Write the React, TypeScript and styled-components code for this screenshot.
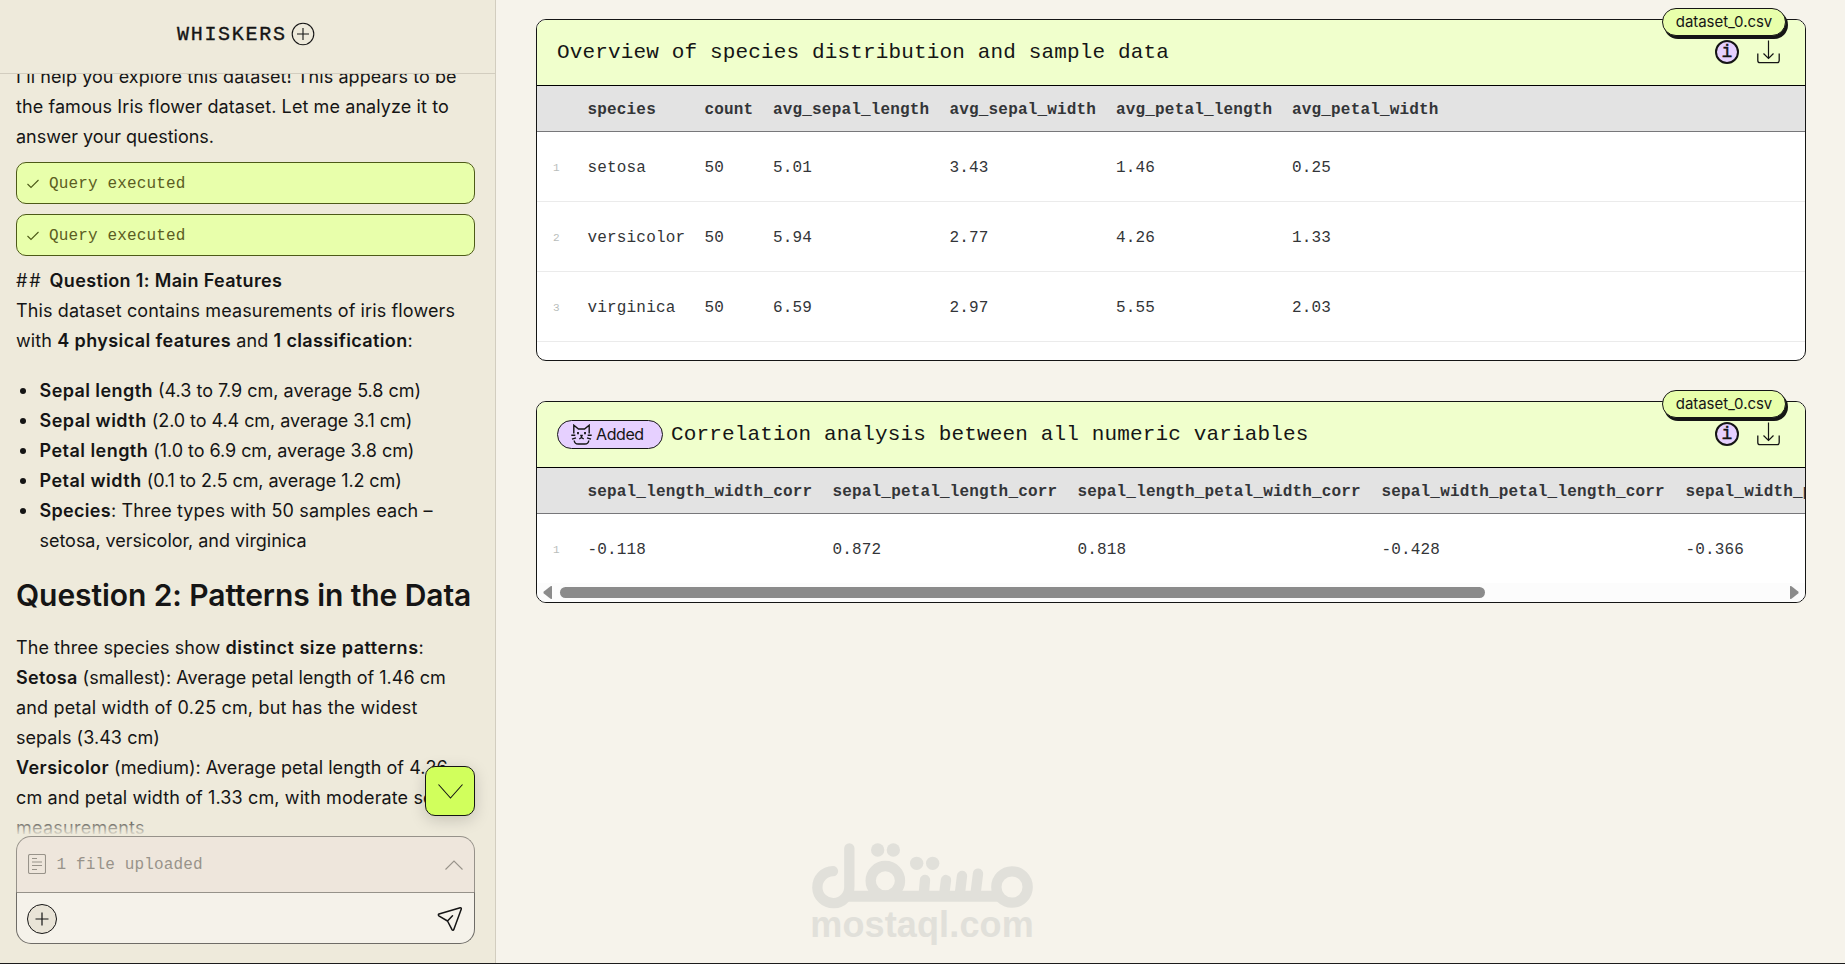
import React from 'react';
import styled, { createGlobalStyle } from 'styled-components';

const sans = `Inter, "Liberation Sans", sans-serif`;
const mono = `"Liberation Mono", "DejaVu Sans Mono", monospace`;
const ink = '#151515';

const GlobalStyle = createGlobalStyle`
  *, *::before, *::after { box-sizing: border-box; }
  html, body { margin: 0; height: 100%; overflow: hidden; }
  body { font-family: ${sans}; color: ${ink}; background: #f6f3eb; }
  svg { display: block; flex: none; }
`;

const Page = styled.div`
  display: flex;
  height: 964px;
  border-bottom: 1px solid #1c1c1c;
`;

/* ---------- sidebar ---------- */

const Sidebar = styled.aside`
  display: flex;
  flex-direction: column;
  flex: none;
  width: 496px;
  background: #eeeadb;
  border-right: 1px solid #d2cdbf;
`;

const Brand = styled.header`
  display: flex;
  align-items: center;
  gap: 4px;
  flex: none;
  height: 74px;
  padding: 0 0 6px 177px;
  border-bottom: 1px solid #d2cdbf;
`;

const BrandName = styled.span`
  padding-top: 2px;
  font: 20px/24px ${mono};
  letter-spacing: 1.7px;
  -webkit-text-stroke: 0.35px ${ink};
`;

const Thread = styled.section`
  position: relative;
  height: 762px;
  flex: none;
  overflow: hidden;
  padding: 0 20px 0 16px;
`;

const Messages = styled.div`
  margin-top: -12px;
  font-size: 18px;
  line-height: 30px;
  white-space: nowrap;
`;

const Line = styled.div<{ $track?: number }>`
  letter-spacing: ${(p) => p.$track ?? 0}px;
`;

const Run = styled.span<{ $track?: number }>`
  letter-spacing: ${(p) => p.$track ?? 0}px;
`;

const Strong = styled.b<{ $track?: number }>`
  font-weight: 600;
  letter-spacing: ${(p) => p.$track ?? 0.4}px;
`;

const QueryList = styled.div`
  display: flex;
  flex-direction: column;
  gap: 10px;
  margin: 10px 0;
`;

const Query = styled.div`
  display: flex;
  align-items: center;
  gap: 10px;
  height: 42px;
  padding: 1px 0 0 10px;
  border: 1px solid #4d5a18;
  border-radius: 10px;
  background: #e8ffab;
  color: #5b5d22;
  font: 16px/20px ${mono};
  letter-spacing: 0.15px;
`;

const Bullets = styled.ul`
  margin: 20px 0;
  padding: 0 0 0 23.5px;
  list-style: none;
`;

const Bullet = styled.li`
  position: relative;
  &::before {
    content: '';
    position: absolute;
    left: -20px;
    top: 12px;
    width: 6px;
    height: 6px;
    border-radius: 50%;
    background: ${ink};
  }
`;

const Heading = styled.h2`
  margin: 0 0 20px;
  padding-top: 1px;
  font-size: 30px;
  line-height: 36px;
  font-weight: 600;
  letter-spacing: -0.08px;
`;

const Fade = styled.div`
  position: absolute;
  left: 0;
  right: 0;
  bottom: 0;
  height: 22px;
  background: linear-gradient(rgba(238, 234, 219, 0), #eeeadb);
`;

const JumpDown = styled.button`
  position: absolute;
  right: 20px;
  bottom: 20px;
  display: grid;
  place-items: center;
  width: 50px;
  height: 50px;
  padding: 0;
  border: 1px solid ${ink};
  border-radius: 10px;
  background: #d1ff5c;
  box-shadow: 0 4px 16px rgba(0, 0, 0, 0.17);
`;

const Composer = styled.div`
  flex: none;
  height: 108px;
  margin: 0 20px 0 16px;
`;

const Uploads = styled.div`
  display: flex;
  align-items: center;
  height: 56px;
  padding: 0 11px 0 11px;
  border: 1px solid #96928a;
  border-bottom: 0;
  border-radius: 15px 15px 0 0;
  background: #eee6dc;
  color: #98938a;
  font: 16px/20px ${mono};
  letter-spacing: 0.15px;

  & > svg:first-child {
    margin-bottom: 2px;
  }
`;

const UploadLabel = styled.span`
  flex: 1;
  padding: 1px 0 0 10.5px;
`;

const Prompt = styled.div`
  display: flex;
  align-items: center;
  justify-content: space-between;
  height: 52px;
  padding: 1px 11px 0 10px;
  border: 1px solid #6e6c67;
  border-top-color: #96928a;
  border-radius: 0 0 15px 15px;
  background: #f5f2ea;
`;

const AddButton = styled.button`
  display: grid;
  place-items: center;
  width: 30px;
  height: 30px;
  padding: 0;
  border: 1px solid ${ink};
  border-radius: 50%;
  background: #e9e4d7;
`;

/* ---------- results ---------- */

const Results = styled.main`
  position: relative;
  flex: 1;
  min-width: 0;
  display: flex;
  flex-direction: column;
  gap: 40px;
  padding: 19px 39px 0 40px;
`;

const Card = styled.article<{ $height: number }>`
  position: relative;
  flex: none;
  height: ${(p) => p.$height}px;
  border: 1px solid ${ink};
  border-radius: 10px;
  background: #fff;
`;

const CardHead = styled.div`
  display: flex;
  align-items: center;
  height: 66px;
  padding: 0 25px 1px 20px;
  border-bottom: 1px solid #000;
  border-radius: 9px 9px 0 0;
  background: #f0ffcc;
`;

const Title = styled.h3`
  flex: 1;
  margin: 0;
  padding-top: 1px;
  font: 21px/26px ${mono};
  letter-spacing: 0.15px;
  white-space: pre;
`;

const Added = styled.span`
  display: flex;
  align-items: center;
  gap: 4px;
  width: 106px;
  height: 29px;
  margin-right: 8px;
  padding-left: 13px;
  border: 1px solid ${ink};
  border-radius: 15px;
  background: #e6d0ff;
  font-size: 16px;
  letter-spacing: -0.4px;
`;

const Info = styled.span`
  display: grid;
  place-items: center;
  width: 24px;
  height: 24px;
  margin-right: 18px;
  border: 2px solid ${ink};
  border-radius: 50%;
  background: #e6d0ff;
  font: 18px/20px ${mono};
  -webkit-text-stroke: 0.4px ${ink};
`;

const FileTag = styled.span`
  position: absolute;
  top: -12px;
  right: 19px;
  width: 124px;
  height: 28px;
  border: 1px solid ${ink};
  border-radius: 15px;
  background: #e8ffab;
  box-shadow: 2px 3px 0 ${ink};
  font-size: 15px;
  line-height: 25px;
  letter-spacing: -0.05px;
  text-align: center;
`;

const TableClip = styled.div`
  overflow: hidden;
`;

const Table = styled.table`
  width: 100%;
  table-layout: fixed;
  border-collapse: separate;
  border-spacing: 0;
  color: #333538;
  font: 16px/20px ${mono};
  letter-spacing: 0.17px;
  white-space: nowrap;
`;

const HeadCell = styled.th`
  height: 46px;
  padding: 2px 0 0 9.5px;
  border-bottom: 1px solid #77777a;
  background: #e3e3e3;
  text-align: left;
  font-weight: bold;
`;

const Cell = styled.td<{ $last?: boolean }>`
  height: ${(p) => (p.$last ? 69 : 70)}px;
  padding: 2px 0 0 9.5px;
  border-bottom: ${(p) => (p.$last ? '0' : '1px solid #ebebeb')};
`;

const IndexCell = styled(Cell)`
  padding-left: 16px;
  color: #b9bdbb;
  font-size: 11px;
`;

const ScrollBar = styled.div`
  display: flex;
  align-items: center;
  height: 19px;
  padding: 0 6px 0 6px;
  border-radius: 0 0 9px 9px;
  background: #fcfcfc;
`;

const Track = styled.div`
  flex: 1;
  padding: 0 10px 0 8px;
`;

const Thumb = styled.div`
  width: 925px;
  height: 11px;
  border-radius: 6px;
  background: #8b8b8b;
`;

const Watermark = styled.div`
  position: absolute;
  left: 310px;
  top: 840px;
`;

/* ---------- icons ---------- */

const PlusCircle = () => (
  <svg width="24" height="24" viewBox="0 0 24 24" fill="none" stroke={ink} strokeWidth="1.1">
    <circle cx="12" cy="12" r="10.8" />
    <path d="M12 6v12M6 12h12" />
  </svg>
);
const Plus = () => (
  <svg width="14" height="14" viewBox="0 0 14 14" fill="none" stroke={ink} strokeWidth="1.2">
    <path d="M7 .5v13M.5 7h13" />
  </svg>
);
const Check = () => (
  <svg width="12" height="10" viewBox="0 0 12 10" fill="none" stroke="#4d5a18" strokeWidth="1.1">
    <path d="M.5 5 4 8.500 11.500 1" />
  </svg>
);
const Chevron = ({ w, h, up, color }: { w: number; h: number; up?: boolean; color: string }) => (
  <svg width={w} height={h} viewBox={`0 0 ${w} ${h}`} fill="none" stroke={color} strokeWidth="1.1">
    <path d={up ? `M.5 ${h - 0.5} ${w / 2} 1 ${w - 0.5} ${h - 0.5}` : `M.5 .5 ${w / 2} ${h - 1} ${w - 0.5} .5`} />
  </svg>
);
const FileIcon = () => (
  <svg width="18" height="20" viewBox="0 0 18 20" fill="none" stroke="#98938a" strokeWidth="1.1">
    <rect x=".5" y=".5" width="17" height="19" rx="1.5" />
    <path d="M4 4.500h5M4 8h10M4 11.500h10M4 15.500h5" />
  </svg>
);
const Send = () => (
  <svg width="26" height="26" viewBox="0 0 26 26" fill="none" stroke={ink} strokeWidth="1.5" strokeLinejoin="round" strokeLinecap="round">
    <path d="M23.200 1.700 2 8Q.8 8.700 1.800 9.800L10.500 15 15 23.700Q16 24.800 16.800 23.500L24.300 3Q24.500 1.500 23.200 1.700ZM10.500 15 15.500 9.800" />
  </svg>
);
const Download = () => (
  <svg width="23" height="24" viewBox="0 0 23 24" fill="none" stroke={ink}>
    <path d="M11.500 .5v18M6.500 13.500l5 5 5-5" strokeWidth="1.2" />
    <path d="M.8 13.500v7q0 2.200 2.200 2.200h17q2.200 0 2.200-2.200v-7" strokeWidth="1.3" />
  </svg>
);
const CatFace = () => (
  <svg width="21" height="21" viewBox="0 0 21 21" fill="none" stroke={ink} strokeWidth="1.4">
    <path d="M2.800 9.500V1.200L7.500 5h6l4.700-3.800v8.300" />
    <path d="M.3 11.200h4M1 15.200l4-1.400M20.700 11.200h-4M20 15.200l-4-1.400" />
    <path d="M7 8v2.200M14 8v2.200" strokeWidth="1.8" />
    <path d="M9.200 11.500h2.600M10.500 11.500v2L8.300 15M10.500 13.500l2.200 1.500" />
    <path d="M3.200 16.500q.3 3.500 4 3.500h6.600q3.700 0 4-3.500" />
  </svg>
);
const Arrow = ({ right }: { right?: boolean }) => (
  <svg width="9" height="13" viewBox="0 0 9 13" fill="#8b8b8b">
    <path d={right ? 'M0 0 1.500 .3 8.500 5.800v1.400L1.500 12.700 0 13Z' : 'M9 0 7.500 .3 .5 5.800v1.400L7.500 12.700 9 13Z'} />
  </svg>
);
const Logo = () => (
  <svg width="240" height="112" viewBox="78 60 720 336" fill="none" stroke="#e1e0da" strokeWidth="31" strokeLinecap="round">
    <path d="M159 153.500A48 48 0 1 0 208 200V85" />
    <path d="M205 228.500H655" strokeWidth="33" strokeLinecap="butt" />
    <circle cx="316" cy="182" r="44" />
    <path d="M435 180 431 226M498 180 492 226M546 168 539 226M594 161 586 226" />
    <circle cx="696" cy="201" r="47" />
    <g fill="#e1e0da" stroke="none">
      <circle cx="293" cy="90" r="20" />
      <circle cx="340" cy="90" r="20" />
      <circle cx="410" cy="130" r="20" />
      <circle cx="458" cy="130" r="20" />
      <text x="91" y="352" fontFamily="Liberation Sans, sans-serif" fontWeight="700" fontSize="108" textLength="670">
        mostaql.com
      </text>
    </g>
  </svg>
);

/* ---------- data ---------- */

type TableData = { widths: number[]; columns: string[]; rows: string[][] };

const overview: TableData = {
  widths: [117, 68.5, 176.5, 166.5, 176],
  columns: ['species', 'count', 'avg_sepal_length', 'avg_sepal_width', 'avg_petal_length', 'avg_petal_width'],
  rows: [
    ['setosa', '50', '5.01', '3.43', '1.46', '0.25'],
    ['versicolor', '50', '5.94', '2.77', '4.26', '1.33'],
    ['virginica', '50', '6.59', '2.97', '5.55', '2.03'],
  ],
};

const correlation: TableData = {
  widths: [245, 245, 304, 304],
  columns: [
    'sepal_length_width_corr',
    'sepal_petal_length_corr',
    'sepal_length_petal_width_corr',
    'sepal_width_petal_length_corr',
    'sepal_width_petal_width_corr',
  ],
  rows: [['-0.118', '0.872', '0.818', '-0.428', '-0.366']],
};

const features = [
  { name: 'Sepal length', track: 0.42, text: '(4.3 to 7.9 cm, average 5.8 cm)', textTrack: 0 },
  { name: 'Sepal width', track: 0.46, text: '(2.0 to 4.4 cm, average 3.1 cm)', textTrack: -0.06 },
  { name: 'Petal length', track: 0.46, text: '(1.0 to 6.9 cm, average 3.8 cm)', textTrack: -0.05 },
  { name: 'Petal width', track: 0.48, text: '(0.1 to 2.5 cm, average 1.2 cm)', textTrack: -0.1 },
];

const DataTable = ({ data, lastOpen }: { data: TableData; lastOpen?: boolean }) => (
  <TableClip>
    <Table>
      <colgroup>
        <col width={41} />
        {data.widths.map((w, i) => (
          <col key={i} width={w} />
        ))}
        <col />
      </colgroup>
      <thead>
        <tr>
          <HeadCell />
          {data.columns.map((c) => (
            <HeadCell key={c}>{c}</HeadCell>
          ))}
        </tr>
      </thead>
      <tbody>
        {data.rows.map((row, r) => (
          <tr key={r}>
            <IndexCell $last={lastOpen}>{r + 1}</IndexCell>
            {row.map((v, i) => (
              <Cell key={i} $last={lastOpen}>{v}</Cell>
            ))}
          </tr>
        ))}
      </tbody>
    </Table>
  </TableClip>
);

const ResultHead = ({ title, added }: { title: string; added?: boolean }) => (
  <CardHead>
    {added && (
      <Added>
        <CatFace />
        Added
      </Added>
    )}
    <Title>{title}</Title>
    <Info>i</Info>
    <Download />
  </CardHead>
);

export default function App() {
  return (
    <>
      <GlobalStyle />
      <Page>
        <Sidebar>
          <Brand>
            <BrandName>WHISKERS</BrandName>
            <PlusCircle />
          </Brand>
          <Thread>
            <Messages>
              <Line $track={0.06}>I'll help you explore this dataset! This appears to be</Line>
              <Line $track={0.09}>the famous Iris flower dataset. Let me analyze it to</Line>
              <Line>answer your questions.</Line>
              <QueryList>
                <Query><Check />Query executed</Query>
                <Query><Check />Query executed</Query>
              </QueryList>
              <Line><Run $track={1.9}>## </Run><Strong $track={0.35}>Question 1: Main Features</Strong></Line>
              <Line $track={0.12}>This dataset contains measurements of iris flowers</Line>
              <Line $track={0.1}>with <Strong>4 physical features</Strong> and <Strong $track={0.38}>1 classification</Strong>:</Line>
              <Bullets>
                {features.map((f) => (
                  <Bullet key={f.name}>
                    <Strong $track={f.track}>{f.name}</Strong> <Run $track={f.textTrack}>{f.text}</Run>
                  </Bullet>
                ))}
                <Bullet>
                  <Line $track={0.13}><Strong $track={0.3}>Species</Strong>: Three types with 50 samples each –</Line>
                  <Line $track={-0.03}>setosa, versicolor, and virginica</Line>
                </Bullet>
              </Bullets>
              <Heading>Question 2: Patterns in the Data</Heading>
              <Line $track={0.06}>The three species show <Strong $track={0.53}>distinct size patterns</Strong>:</Line>
              <Line $track={0.02}><Strong $track={0.3}>Setosa</Strong> (smallest): Average petal length of 1.46 cm</Line>
              <Line $track={0.17}>and petal width of 0.25 cm, but has the widest</Line>
              <Line $track={0.05}>sepals (3.43 cm)</Line>
              <Line $track={0.03}><Strong $track={0.43}>Versicolor</Strong> (medium): Average petal length of 4.26</Line>
              <Line $track={0.12}>cm and petal width of 1.33 cm, with moderate sepal</Line>
              <Line $track={0.25}>measurements</Line>
            </Messages>
            <Fade />
            <JumpDown aria-label="Scroll to latest">
              <Chevron w={25} h={15} color={ink} />
            </JumpDown>
          </Thread>
          <Composer>
            <Uploads>
              <FileIcon />
              <UploadLabel>1 file uploaded</UploadLabel>
              <Chevron w={18} h={10} up color="#98938a" />
            </Uploads>
            <Prompt>
              <AddButton aria-label="Add"><Plus /></AddButton>
              <Send />
            </Prompt>
          </Composer>
        </Sidebar>
        <Results>
          <Card $height={342}>
            <ResultHead title="Overview of species distribution and sample data" />
            <DataTable data={overview} />
            <FileTag>dataset_0.csv</FileTag>
          </Card>
          <Card $height={202}>
            <ResultHead added title="Correlation analysis between all numeric variables" />
            <DataTable data={correlation} lastOpen />
            <ScrollBar>
              <Arrow />
              <Track><Thumb /></Track>
              <Arrow right />
            </ScrollBar>
            <FileTag>dataset_0.csv</FileTag>
          </Card>
          <Watermark><Logo /></Watermark>
        </Results>
      </Page>
    </>
  );
}
